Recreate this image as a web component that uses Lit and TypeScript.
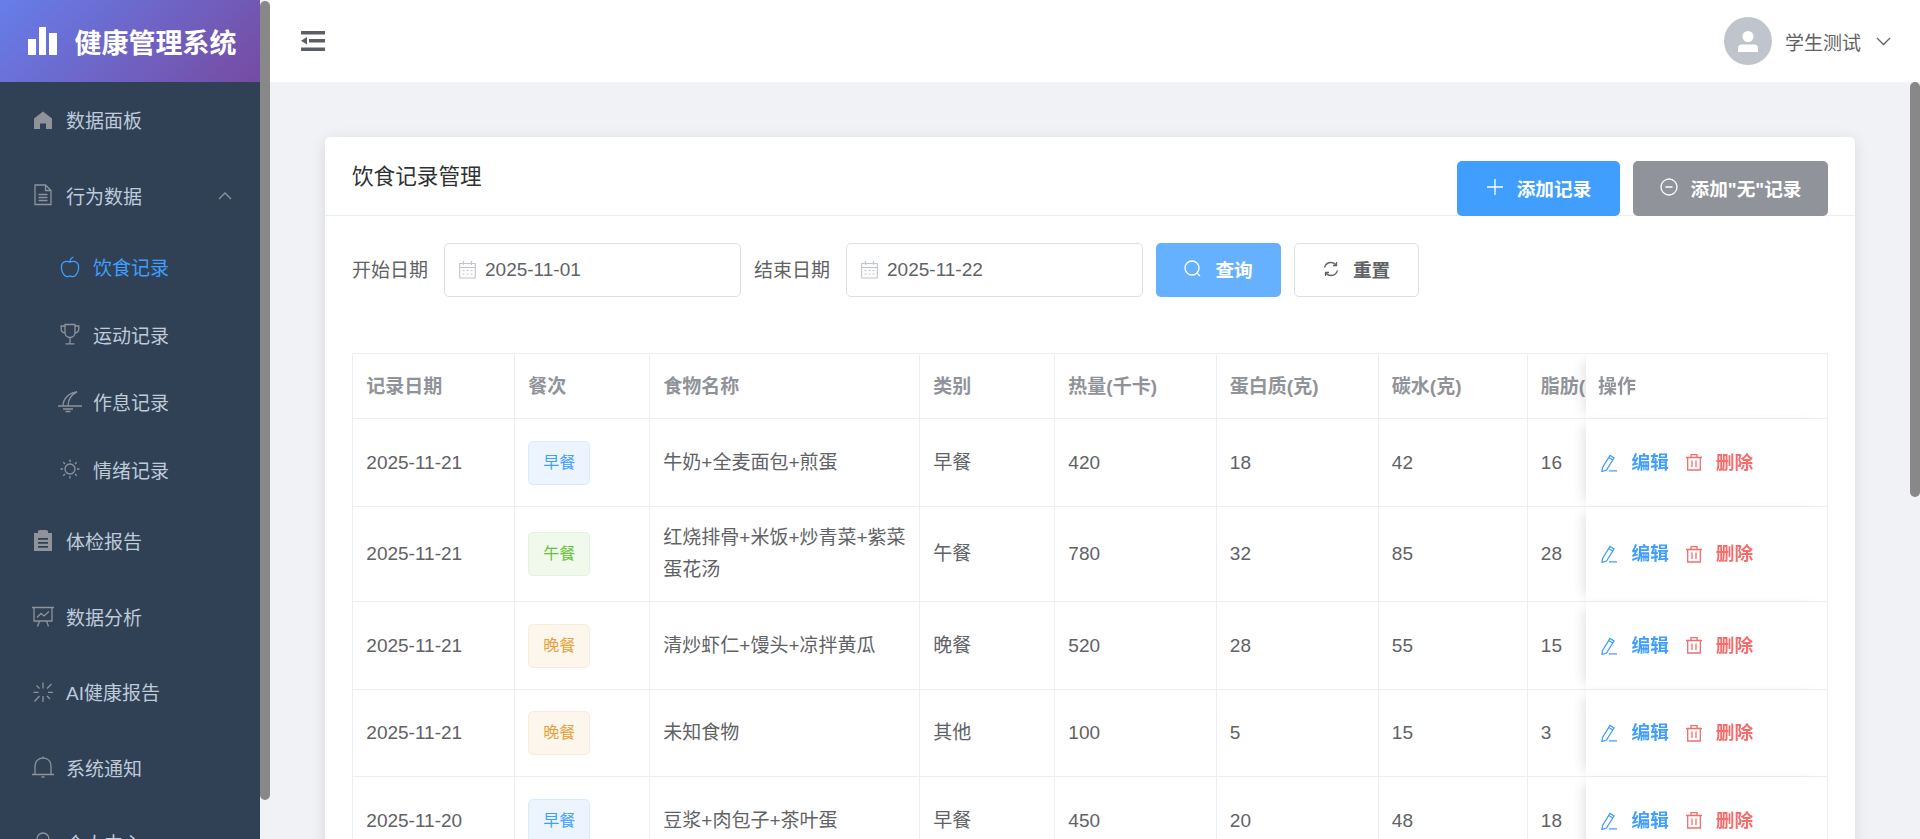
import { LitElement, html, css, svg } from "lit";
import { customElement } from "lit/decorators.js";

const icons: Record<string, any> = {
  home: svg`<path fill="currentColor" stroke="none" d="M9 0.5 L18 7.5 V18 H12 V12.5 H6 V18 H0 V7.5 Z"/>`,
  doc: svg`<path d="M1 1h10.5L17 6.5V20.5H1Z M11.5 1v5.5H17 M4.5 10.5h9 M4.5 13.5h9 M4.5 16.5h9"/>`,
  apple: svg`<path d="M10 6.2C7.5 4.6 2 4.8 1.4 10.6 1 15 4 20.6 7 20.6c1.3 0 2-.6 3-.6s1.700.6 3 .6c3 0 6-5.600 5.600-10C18 4.800 12.500 4.600 10 6.200Z M10 6C10 3.600 11.300 1.800 13.500 1"/>`,
  trophy: svg`<path d="M5 1.500h10v8c0 3-2.200 5-5 5s-5-2-5-5Z M5 3H1.200v3c0 2.200 1.800 3.800 4.100 3.800 M15 3h3.800v3c0 2.200-1.800 3.800-4.100 3.800 M10 14.500V20.500 M5.500 20.800h9"/>`,
  moon: svg`<path d="M0 15h24 M5 15C5 8 11 1.500 19 .8 13.500 3.500 10 9 10 15 M5 18h10 M7.500 20.500h5"/>`,
  sun: svg`<circle cx="10" cy="10" r="5"/><path d="M10 .5v2.500 M10 17v2.500 M.5 10H3 M17 10h2.500 M3.300 3.300l1.700 1.700 M15 15l1.700 1.700 M3.300 16.700L5 15 M15 5l1.700-1.700"/>`,
  order: svg`<path fill="currentColor" stroke="none" fill-rule="evenodd" d="M0 3h4V0.500h1.500V0h7v.5H14V3h4v18H0Z M4 8v1.800h10V8Z M4 12v1.800h10V12Z M4 16v1.800h10V16Z"/>`,
  board: svg`<path d="M0 1.500h22 M2 1.500V15h18V1.500 M5 11.500l4-4 3 2.500 5-4.500 M7.500 15l-2 5.500 M14.500 15l2 5.500"/>`,
  spin: svg`<path d="M10 .5v6 M10 14v6 M.5 10.300h5 M15 10.300h5 M1.500 19.500l5-5.500 M14 6.500l4.500-4.500 M3.500 3.500L6.500 6.500 M14 14l3 3"/>`,
  bell: svg`<path d="M0 18.500h22 M3 18.500V11C3 5.500 6 2 11 2s8 3.500 8 9v7.500 M11 .5V2 M9.500 21h3"/>`,
  user: svg`<circle cx="10" cy="7" r="6"/><path d="M1 22c0-5 4-8 9-8s9 3 9 8"/>`,
  chevUp: svg`<path d="M1 8L7 2l6 6"/>`,
  chevDown: svg`<path d="M1 1l6.500 6.500L14 1"/>`,
  plus: svg`<path d="M8 0v16 M0 8h16"/>`,
  minus: svg`<circle cx="9" cy="9" r="8"/><path d="M5.500 9h7"/>`,
  search: svg`<circle cx="8" cy="8" r="7"/><path d="M13 13l3 3"/>`,
  refresh: svg`<path d="M1.500 6.500C2.500 3.300 5 1.500 8 1.500c2 0 3.700.8 5 2.300 M14.500 9.500c-1 3.200-3.500 5-6.500 5-2 0-3.700-.8-5-2.300 M13.500 1v3.500H10 M2.500 15v-3.500H6"/>`,
  cal: svg`<path d="M.7 2.500h15.600V17H.7Z M.7 6.500h15.600 M4.500 0v4 M12.500 0v4 M3.500 9.500h2 M7.500 9.500h2 M11.500 9.500h2 M3.500 13h2 M7.500 13h2 M11.500 13h2"/>`,
  edit: svg`<path d="M1.500 13.500L9 1.500l4 2.500-7.500 12-4.500 1.500Z M7.800 3.500l4 2.500 M8 16.800h8"/>`,
  trash: svg`<path d="M0 3.500h16 M5 3.500V.7h6v2.800 M1.700 3.500V16h12.600V3.500 M6 6.500v6.500 M10 6.500v6.500"/>`,
};

const icon = (n: string, w: number, h: number, cls = "") => html`<svg
  class="ic ${cls}"
  width=${w}
  height=${h}
  viewBox="0 0 ${w} ${h}"
>${icons[n]}</svg>`;

type Row = { date: string; meal: string; tone: string; food: string; cat: string; kcal: number; p: number; c: number; f: number };
const rows: Row[] = [
  { date: "2025-11-21", meal: "早餐", tone: "blue", food: "牛奶+全麦面包+煎蛋", cat: "早餐", kcal: 420, p: 18, c: 42, f: 16 },
  { date: "2025-11-21", meal: "午餐", tone: "green", food: "红烧排骨+米饭+炒青菜+紫菜蛋花汤", cat: "午餐", kcal: 780, p: 32, c: 85, f: 28 },
  { date: "2025-11-21", meal: "晚餐", tone: "orange", food: "清炒虾仁+馒头+凉拌黄瓜", cat: "晚餐", kcal: 520, p: 28, c: 55, f: 15 },
  { date: "2025-11-21", meal: "晚餐", tone: "orange", food: "未知食物", cat: "其他", kcal: 100, p: 5, c: 15, f: 3 },
  { date: "2025-11-20", meal: "早餐", tone: "blue", food: "豆浆+肉包子+茶叶蛋", cat: "早餐", kcal: 450, p: 20, c: 48, f: 18 },
];

@customElement("app-root")
export class AppRoot extends LitElement {
  static styles = css`
    :host {
      display: block;
      height: 100vh;
      overflow: hidden;
      font-family: "Liberation Sans", "Noto Sans CJK SC", sans-serif;
      font-size: 19px;
      color: #606266;
    }
    * { box-sizing: border-box; }
    .ic { flex: none; display: block; fill: none; stroke: currentColor; stroke-width: 1.3; }
    .layout { display: flex; height: 100%; }
    .track { width: 10px; flex: none; background: #f0f2f5; }
    .thumb { display: block; width: 10px; background: #888; border-radius: 5px; }
    .t-side { height: 799px; margin-top: 1px; }
    .t-main { height: 415px; }
    .side { width: 270px; flex: none; display: flex; overflow: hidden; }
    .nav { width: 260px; flex: none; background: #304156; height: 880px; color: #bfcbd9; }
    .logo {
      height: 82px;
      display: flex;
      align-items: center;
      padding-left: 28px;
      gap: 18px;
      background: linear-gradient(135deg, #667eea, #764ba2);
      color: #fff;
      font-size: 27px;
      font-weight: 700;
    }
    .bars { display: flex; align-items: flex-end; gap: 3px; height: 28px; }
    .bars i { display: block; background: #fff; width: 7.500px; }
    .bars i:nth-child(1) { height: 16px; }
    .bars i:nth-child(2) { height: 28px; }
    .bars i:nth-child(3) { height: 22px; }
    .item { height: 75.500px; display: flex; align-items: center; }
    .item .slot { width: 66px; flex: none; display: flex; justify-content: center; padding-left: 22px; padding-right: 2px; color: #909399; }
    .item .chev { margin-left: auto; margin-right: 28px; color: #909399; }
    .sub { height: 67.500px; }
    .item.sub .slot { width: 93px; padding-left: 50px; padding-right: 3px; }
    .active { color: #409eff; }
    .item.active .slot { color: #409eff; }
    .body { flex: 1; min-width: 0; display: flex; flex-direction: column; }
    .top {
      height: 82px;
      flex: none;
      background: #fff;
      display: flex;
      align-items: center;
      justify-content: space-between;
      padding: 0 29px 0 31px;
    }
    .fold { color: #5a5e66; display: block; }
    .fold .ic { stroke: none; fill: currentColor; }
    .user { display: flex; align-items: center; }
    .avatar { width: 48px; height: 48px; border-radius: 50%; background: #c0c4cc; display: flex; align-items: center; justify-content: center; }
    .avatar .ic { stroke: none; fill: #fff; }
    .name { margin-left: 13px; margin-right: 15px; }
    .below { flex: 1; min-height: 0; display: flex; overflow: hidden; }
    .main { flex: 1; min-width: 0; padding: 55px 55px 0; background: #f0f2f5; }
    .card {
      background: #fff;
      border-radius: 5px;
      height: 1270px;
      box-shadow: 0 3px 16px rgba(0, 0, 0, 0.1);
      overflow: hidden;
    }
    .head {
      height: 79px;
      border-bottom: 1px solid #ebeef5;
      padding: 24px 27px 0;
      display: flex;
      justify-content: space-between;
      align-items: flex-start;
    }
    .title { font-size: 21.600px; color: #303133; line-height: 32px; }
    .btns { display: flex; gap: 13px; }
    .btn {
      height: 55px;
      border-radius: 5px;
      display: flex;
      align-items: center;
      justify-content: center;
      gap: 14px;
      font-size: 18.670px;
      font-weight: 700;
      color: #fff;
      padding-bottom: 3px;
    }
    .add { width: 163px; background: #409eff; padding-left: 1px; }
    .none { width: 195px; background: #909399; gap: 13px; }
    .filter { display: flex; align-items: center; padding: 27px 27px 0; height: 81px; }
    .lbl { margin-right: 16px; padding-bottom: 4px; }
    .input {
      width: 297px;
      height: 54px;
      border: 1px solid #dcdfe6;
      border-radius: 5px;
      display: flex;
      align-items: center;
      padding-left: 14px;
      gap: 9px;
      margin-right: 13px;
    }
    .input .ic { color: #c0c4cc; stroke-width: 1.100; }
    .query { width: 125px; height: 54px; background: #66b1ff; margin-right: 13px; }
    .reset { width: 125px; height: 54px; background: #fff; color: #606266; border: 1px solid #dcdfe6; }
    .wrap {
      margin: 56px 27px 0;
      overflow: hidden;
      border-left: 1px solid #ebeef5;
      border-top: 1px solid #ebeef5;
    }
    table { border-collapse: separate; border-spacing: 0; table-layout: fixed; width: 1565px; }
    th, td {
      border-right: 1px solid #ebeef5;
      border-bottom: 1px solid #ebeef5;
      padding: 0 13.330px;
      text-align: left;
      background: #fff;
      font-weight: 400;
      line-height: 32px;
    }
    th { height: 65px; padding-top: 2px; color: #909399; font-weight: 700; white-space: nowrap; overflow: hidden; }
    th.op { padding-left: 12.500px; }
    tbody tr { height: 88px; }
    tbody tr:nth-child(2) { height: 95px; }
    tbody tr:nth-child(4) { height: 87px; }
    .op { position: sticky; right: 0; z-index: 1; box-shadow: -8px 0 12px -6px rgba(0, 0, 0, 0.12); overflow: visible; }
    .tag {
      display: inline-flex;
      align-items: center;
      justify-content: center;
      width: 62px;
      height: 44px;
      border-radius: 5px;
      border: 1px solid;
      font-size: 16px;
      vertical-align: middle;
    }
    .blue { background: #ecf5ff; border-color: #d9ecff; color: #409eff; }
    .green { background: #f0f9eb; border-color: #e1f3d8; color: #67c23a; }
    .orange { background: #fdf6ec; border-color: #faecd8; color: #e6a23c; }
    .acts { display: flex; align-items: center; font-size: 18.670px; font-weight: 700; padding-left: 2.670px; }
    .link { display: flex; align-items: center; gap: 14px; margin-right: 17px; }
    .e { color: #409eff; }
    .d { color: #f56c6c; }
  `;

  private navItem(ic: string, w: number, h: number, label: string, extra = "") {
    return html`<div class="item ${extra}"><span class="slot">${icon(ic, w, h)}</span><span>${label}</span>${
      extra.includes("open") ? icon("chevUp", 14, 9, "chev") : ""
    }</div>`;
  }

  render() {
    return html`<div class="layout">
      <aside class="side">
        <nav class="nav">
          <div class="logo"><span class="bars"><i></i><i></i><i></i></span><span>健康管理系统</span></div>
          ${this.navItem("home", 18, 18, "数据面板")}
          ${this.navItem("doc", 18, 22, "行为数据", "open")}
          ${this.navItem("apple", 20, 22, "饮食记录", "sub active")}
          ${this.navItem("trophy", 20, 22, "运动记录", "sub")}
          ${this.navItem("moon", 24, 22, "作息记录", "sub")}
          ${this.navItem("sun", 20, 20, "情绪记录", "sub")}
          ${this.navItem("order", 18, 21, "体检报告")}
          ${this.navItem("board", 22, 21, "数据分析")}
          ${this.navItem("spin", 20, 20, "AI健康报告")}
          ${this.navItem("bell", 22, 22, "系统通知")}
          ${this.navItem("user", 20, 22, "个人中心")}
        </nav>
        <div class="track"><span class="thumb t-side"></span></div>
      </aside>
      <div class="body">
        <header class="top">
          <span class="fold"><svg class="ic" width="24" height="20" viewBox="0 0 24 20"><path d="M0 0h24v3.500H0Z M8 8h16v3.500H8Z M0 9.700L6 6v7.500Z M0 16.500h24V20H0Z"/></svg></span>
          <div class="user">
            <span class="avatar"><svg class="ic" width="20" height="21" viewBox="0 0 20 21"><circle cx="10" cy="5.500" r="5.500"/><path d="M0 21v-3.500c0-2.500 1.500-4 3.500-4h13c2 0 3.500 1.500 3.500 4V21Z"/></svg></span>
            <span class="name">学生测试</span>
            ${icon("chevDown", 15, 9)}
          </div>
        </header>
        <div class="below">
          <main class="main">
            <section class="card">
              <div class="head">
                <span class="title">饮食记录管理</span>
                <div class="btns">
                  <div class="btn add">${icon("plus", 16, 16)}<span>添加记录</span></div>
                  <div class="btn none">${icon("minus", 18, 18)}<span>添加"无"记录</span></div>
                </div>
              </div>
              <div class="filter">
                <span class="lbl">开始日期</span>
                <div class="input">${icon("cal", 17, 18)}<span>2025-11-01</span></div>
                <span class="lbl">结束日期</span>
                <div class="input">${icon("cal", 17, 18)}<span>2025-11-22</span></div>
                <div class="btn query">${icon("search", 17, 17)}<span>查询</span></div>
                <div class="btn reset">${icon("refresh", 16, 16)}<span>重置</span></div>
              </div>
              <div class="wrap">
                <table>
                  <colgroup>
                    <col style="width:162px" /><col style="width:135px" /><col style="width:270px" /><col style="width:135px" />
                    <col style="width:161.500px" /><col style="width:162px" /><col style="width:149px" /><col style="width:148px" /><col style="width:242.500px" />
                  </colgroup>
                  <thead>
                    <tr>
                      <th>记录日期</th><th>餐次</th><th>食物名称</th><th>类别</th><th>热量(千卡)</th>
                      <th>蛋白质(克)</th><th>碳水(克)</th><th>脂肪(克)</th><th class="op">操作</th>
                    </tr>
                  </thead>
                  <tbody>
                    ${rows.map(
                      (r) => html`<tr>
                        <td>${r.date}</td>
                        <td><span class="tag ${r.tone}">${r.meal}</span></td>
                        <td>${r.food}</td>
                        <td>${r.cat}</td>
                        <td>${r.kcal}</td>
                        <td>${r.p}</td>
                        <td>${r.c}</td>
                        <td>${r.f}</td>
                        <td class="op">
                          <div class="acts">
                            <span class="link e">${icon("edit", 16, 18)}<span>编辑</span></span>
                            <span class="link d">${icon("trash", 16, 17)}<span>删除</span></span>
                          </div>
                        </td>
                      </tr>`
                    )}
                  </tbody>
                </table>
              </div>
            </section>
          </main>
          <div class="track"><span class="thumb t-main"></span></div>
        </div>
      </div>
    </div>`;
  }
}
